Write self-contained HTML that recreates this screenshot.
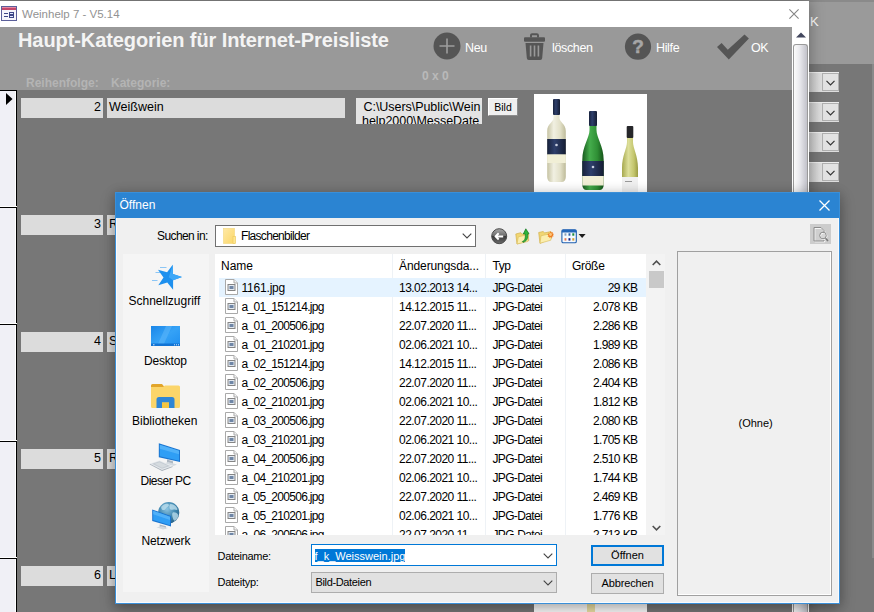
<!DOCTYPE html>
<html lang="de">
<head>
<meta charset="utf-8">
<title>Weinhelp 7 - V5.14</title>
<style>
*{box-sizing:border-box;margin:0;padding:0}
html,body{width:874px;height:612px;overflow:hidden;background:#777}
body{position:relative;font-family:"Liberation Sans",sans-serif;font-size:12px;color:#000}
.a{position:absolute}
.t{position:absolute;white-space:nowrap;line-height:1}
/* ---------- background form (behind main window) ---------- */
#bg{left:0;top:0;width:874px;height:612px;background:#777}
#bghead{left:0;top:0;width:874px;height:64px;background:#9a9a9a}
#topline{left:0;top:0;width:874px;height:2px;background:#8a8a8a}
.dd{left:809px;width:30px;height:20px;background:linear-gradient(90deg,#c8c8c8,#dedede 12px,#dedede);box-shadow:inset 0 1px 0 #ececec}
.dd i{position:absolute;left:13px;top:1px;width:17px;height:18px;background:#e2e2e2;border:1px solid #b0b0b0}
.dd svg{position:absolute;left:17px;top:7.500px}
/* ---------- main window ---------- */
#win{left:0;top:1px;width:809px;height:611px;background:#777;box-shadow:0 0 14px rgba(0,0,0,.35)}
#tbar{left:0;top:0;width:809px;height:26px;background:#fff}
#hdr{left:0;top:26px;width:792px;height:63px;background:#999}
#body{left:0;top:89px;width:792px;height:522px;background:#777}
#vsb{left:792px;top:26px;width:17px;height:585px;background:#fff}
#thumb{left:1px;top:17px;width:15px;height:568px;border:1px solid #9a9a9a;border-bottom:0;border-radius:3px 3px 0 0;background:linear-gradient(90deg,#fbfbfb 0%,#ebebef 40%,#c2c2ca 100%)}
#sel{left:0;top:89px;width:17px;height:522px;background:#f0f0f6;border-right:1px solid #000;border-top:1px solid #000;box-shadow:inset -1px 0 0 #fff}
.sl{left:0;width:17px;height:1px;background:#000;box-shadow:0 -1px 0 #fff}
.f{height:20px;background:#dcdcdc;font-size:12.5px;line-height:19px;overflow:hidden;white-space:nowrap}
.f1{left:21px;width:82px;text-align:right;padding-right:2px}
.f2{left:107px;width:238px;padding-left:2px}
.hl{font-weight:bold;color:#b4b4b4;font-size:12px}
.tb{color:#fff;font-size:12.5px;letter-spacing:-.35px}
/* ---------- open dialog ---------- */
#dlg{left:115px;top:192px;width:725px;height:412px;background:#f0f0f0;border:1px solid #3a8fd8;box-shadow:inset 0 0 0 1px #f7fbff,0 6px 14px 0 rgba(0,0,0,.28),0 0 10px 1px rgba(0,0,0,.12)}
#dtitle{left:0;top:0;width:723px;height:25px;background:#2b84d2}
</style>
</head>
<body>
<!-- background form -->
<div id="bg" class="a"></div>
<div id="bghead" class="a"></div>
<div id="topline" class="a"></div>
<div class="a" style="left:872px;top:64px;width:2px;height:494px;background:#8a8a8a"></div>
<div class="t" style="left:810px;top:15px;font-size:13px;color:#fff">K</div>
<div class="a dd" style="top:72px"><i></i><svg width="9" height="6" viewBox="0 0 9 6"><path d="M.5 .8 4.5 4.8 8.5 .8" fill="none" stroke="#333" stroke-width="1.2"/></svg></div>
<div class="a dd" style="top:102px"><i></i><svg width="9" height="6" viewBox="0 0 9 6"><path d="M.5 .8 4.5 4.8 8.5 .8" fill="none" stroke="#333" stroke-width="1.2"/></svg></div>
<div class="a dd" style="top:132px"><i></i><svg width="9" height="6" viewBox="0 0 9 6"><path d="M.5 .8 4.5 4.8 8.5 .8" fill="none" stroke="#333" stroke-width="1.2"/></svg></div>
<div class="a dd" style="top:162px"><i></i><svg width="9" height="6" viewBox="0 0 9 6"><path d="M.5 .8 4.5 4.8 8.5 .8" fill="none" stroke="#333" stroke-width="1.2"/></svg></div>

<!-- main window -->
<div id="win" class="a">
  <div id="tbar" class="a"></div>
  <div id="hdr" class="a"></div>
  <div id="body" class="a"></div>
  <div id="vsb" class="a"><div id="thumb" class="a"></div></div>
  <div id="sel" class="a"></div>
  <svg class="a" style="left:6px;top:92px" width="7" height="12" viewBox="0 0 7 12"><path d="M0 0 6.500 6 0 12z" fill="#000"/></svg>
  <div class="a sl" style="top:206px"></div>
  <div class="a sl" style="top:323px"></div>
  <div class="a sl" style="top:440px"></div>
  <div class="a sl" style="top:557px"></div>


  <!-- title bar -->
  <svg class="a" style="left:1px;top:5px" width="16" height="15" viewBox="0 0 16 15">
    <rect x=".5" y=".5" width="15" height="14" fill="#f4f4fb" stroke="#5b5f9a"/>
    <rect x="1" y="1" width="14" height="3" fill="#c5466a"/>
    <rect x="1" y="1" width="14" height="1" fill="#e58aa2"/>
    <path d="M3 7.5h4M3 10.5h4" stroke="#3d4687" stroke-width="1"/>
    <rect x="8.5" y="6.5" width="4" height="2" fill="#dfe6ff" stroke="#3d4687"/>
    <rect x="8.5" y="9.5" width="4" height="2" fill="#dfe6ff" stroke="#3d4687"/>
  </svg>
  <div class="t" id="wtitle" style="left:22px;top:8px;font-size:11.5px;color:#929292">Weinhelp 7 - V5.14</div>
  <svg class="a" style="left:789px;top:8px" width="10" height="10" viewBox="0 0 10 10"><path d="M.4 .4 9.600 9.600M9.600 .4 .4 9.600" stroke="#858585" stroke-width="1.100" fill="none"/></svg>
  <!-- scrollbar arrow -->
  <svg class="a" style="left:795.500px;top:31px" width="10" height="6" viewBox="0 0 10 6"><path d="M0 5.500 5 .5 10 5.500z" fill="#43475e"/></svg>

  <!-- header -->
  <div class="t" id="htitle" style="left:18px;top:29px;font-size:20px;letter-spacing:-.09px;font-weight:bold;color:#f4f4f4">Haupt-Kategorien für Internet-Preisliste</div>
  <div class="t hl" id="hl1" style="left:26px;top:76px">Reihenfolge:</div>
  <div class="t hl" id="hl2" style="left:111px;top:76px">Kategorie:</div>
  <div class="t hl" id="hl3" style="left:422px;top:69px;color:#b9b9b9">0 x 0</div>

  <!-- Neu -->
  <svg class="a" style="left:433px;top:31px" width="28" height="28" viewBox="0 0 28 28"><circle cx="14" cy="14" r="13.5" fill="#555"/><path d="M14 6.5v15M6.5 14h15" stroke="#9d9d9d" stroke-width="1.6" fill="none"/></svg>
  <div class="t tb" id="b1" style="margin-top:1.500px;left:465px;top:39px">Neu</div>
  <!-- löschen -->
  <svg class="a" style="left:524px;top:32px" width="21" height="27" viewBox="0 0 21 27">
    <path d="M7 4.500V2.300a1.100 1.100 0 0 1 1.100-1.100h4.800a1.100 1.100 0 0 1 1.100 1.100V4.500" fill="none" stroke="#555" stroke-width="1.900"/>
    <rect x="0" y="4.300" width="21" height="4.400" rx="1" fill="#555"/>
    <path d="M1.500 10h18l-1.300 15a2 2 0 0 1-2 1.900H4.800a2 2 0 0 1-2-1.900z" fill="#555"/>
    <path d="M6.600 12.500v11M10.500 12.500v11M14.400 12.500v11" stroke="#999" stroke-width="1.600"/>
  </svg>
  <div class="t tb" id="b2" style="margin-top:1.500px;left:552px;top:39px">löschen</div>
  <!-- Hilfe -->
  <svg class="a" style="left:624px;top:32px" width="28" height="28" viewBox="0 0 28 28"><circle cx="14" cy="13.700" r="13.100" fill="#555"/><text x="14" y="20.300" text-anchor="middle" font-family="Liberation Sans, sans-serif" font-weight="bold" font-size="19" fill="#a6a6a6" stroke="#a6a6a6" stroke-width=".5">?</text></svg>
  <div class="t tb" id="b3" style="margin-top:1.500px;left:656px;top:39px">Hilfe</div>
  <!-- OK -->
  <svg class="a" style="left:716px;top:32px" width="34" height="28" viewBox="0 0 34 28"><path d="M1 14.100 5.600 10 11.800 16.700 28.500 1.500 32.900 5.400 12.800 26.500z" fill="#555"/></svg>
  <div class="t tb" id="b4" style="margin-top:1.500px;left:751px;top:39px">OK</div>

  <!-- record 1 extras -->
  <div class="a" style="left:356px;top:97px;width:126px;height:26px;background:#e4e4e4;overflow:hidden;font-size:12.500px;line-height:14px;padding:2px 0 0 0;white-space:nowrap;letter-spacing:-.05px"><span style="margin-left:7.500px">C:\Users\Public\Wein</span><br><span style="margin-left:6px">help2000\MesseDate</span></div>
  <div class="a" style="left:488px;top:97px;width:30px;height:18px;background:#efefef;border:1px solid #fff;border-right-color:#8c8c8c;border-bottom-color:#8c8c8c;font-size:10.5px;line-height:16px;text-align:center">Bild</div>
  <div class="a" id="img1" style="left:534px;top:93px;width:113px;height:100px;background:#fff;overflow:hidden">
    <svg width="113" height="100" viewBox="0 0 113 100">
      <defs>
        <linearGradient id="g1" x1="0" x2="1"><stop offset="0" stop-color="#c6c3a3"/><stop offset=".35" stop-color="#f1f0e2"/><stop offset=".7" stop-color="#e2e0c8"/><stop offset="1" stop-color="#bebb9a"/></linearGradient>
        <linearGradient id="g2" x1="0" x2="1"><stop offset="0" stop-color="#17591e"/><stop offset=".35" stop-color="#45ad4c"/><stop offset=".7" stop-color="#2f8f35"/><stop offset="1" stop-color="#155219"/></linearGradient>
        <linearGradient id="g3" x1="0" x2="1"><stop offset="0" stop-color="#a6a84e"/><stop offset=".4" stop-color="#dddf9a"/><stop offset=".75" stop-color="#c3c56c"/><stop offset="1" stop-color="#999b43"/></linearGradient>
        <linearGradient id="gn" x1="0" x2="1"><stop offset="0" stop-color="#18223c"/><stop offset=".4" stop-color="#2e3f6b"/><stop offset="1" stop-color="#151d33"/></linearGradient>
      </defs>
      <!-- bottle 1 -->
      <path d="M19.500 6h6v18c0 4 6.300 6 6.300 13v46c0 3-1.800 5-4 5H17.200c-2.200 0-4-2-4-5V37c0-7 6.300-9 6.300-13z" fill="url(#g1)"/>
      <rect x="19" y="5" width="7" height="16" rx="1" fill="url(#gn)"/>
      <rect x="13.200" y="45" width="18.600" height="15.500" fill="url(#gn)"/>
      <rect x="13.200" y="60.500" width="18.600" height="8.500" fill="#f1efd6"/>
      <circle cx="22.500" cy="51" r="1.300" fill="#c9cfdf"/>
      <!-- bottle 2 -->
      <path d="M55.500 18h7v18c0 8 7.200 16 7.200 30v25c0 3-2 5-4 5H52.300c-2 0-4-2-4-5V66c0-14 7.200-22 7.200-30z" fill="url(#g2)"/>
      <rect x="55" y="17" width="8" height="15" rx="1" fill="url(#gn)"/>
      <rect x="48.300" y="67" width="21.400" height="15" fill="url(#gn)"/>
      <rect x="48.300" y="82" width="21.400" height="9.500" fill="#f1efd6"/>
      <circle cx="59" cy="73" r="1.300" fill="#c9cfdf"/>
      <!-- bottle 3 -->
      <path d="M93 33h6v15c0 6 5 14 5 26v26H88V74c0-12 5-20 5-26z" fill="url(#g3)"/>
      <rect x="92.700" y="32" width="6.600" height="12" rx="1" fill="#26262a"/>
      <rect x="88" y="83" width="16" height="17" fill="#f0f0f0"/>
      <rect x="91" y="87" width="7" height="1" fill="#999"/>
    </svg>
  </div>
  <!-- image visible below dialog -->
  <div class="a" style="left:534px;top:561px;width:113px;height:50px;background:#fff"><div class="a" style="left:53px;top:30px;width:8px;height:20px;background:#efe3a6"></div></div>
  <div class="a f f1" style="top:97px">2</div><div class="a f f2" style="top:97px">Weißwein</div>
  <div class="a f f1" style="top:214px">3</div><div class="a f f2" style="top:214px">Rotwein</div>
  <div class="a f f1" style="top:331px">4</div><div class="a f f2" style="top:331px">Sekt</div>
  <div class="a f f1" style="top:448px">5</div><div class="a f f2" style="top:448px">Rosé</div>
  <div class="a f f1" style="top:565px">6</div><div class="a f f2" style="top:565px">Likör</div>
</div>

<!-- dialog -->
<div id="dlg" class="a">
  <div id="dtitle" class="a"></div>
  <div class="t" style="left:3.5px;top:5.5px;font-size:12px;color:#fff">Öffnen</div>
  <svg class="a" style="left:702.5px;top:6.5px" width="11" height="11" viewBox="0 0 11 11"><path d="M.5 .5 10.500 10.500M10.500 .5 .5 10.500" stroke="#fff" stroke-width="1.300" fill="none"/></svg>
  <div class="t" style="left:41px;top:36.5px;letter-spacing:-.6px">Suchen in:</div>
  <div class="a" id="lookin" style="left:99px;top:32px;width:261px;height:22px;background:#fff;border:1px solid #707070"></div>
  <svg class="a" style="left:107px;top:35px" width="13" height="16" viewBox="0 0 13 16"><defs><linearGradient id="gf" x1="0" y1="0" x2="1" y2="1"><stop offset="0" stop-color="#ffe9a6"/><stop offset="1" stop-color="#fbd768"/></linearGradient></defs><rect x=".4" y=".3" width="11.200" height="15.300" fill="url(#gf)" stroke="#f3d983" stroke-width=".6"/><rect x="10" y="8.300" width="2.600" height="7.300" fill="#ffe68f" stroke="#ecc95c" stroke-width=".6"/></svg>
  <div class="t" style="left:125px;top:36.5px;letter-spacing:-.7px">Flaschenbilder</div>
  <svg class="a" style="left:346px;top:40px" width="10" height="6" viewBox="0 0 10 6"><path d="M.700 .700 5 5 9.300 .700" fill="none" stroke="#444" stroke-width="1.100"/></svg>
  <svg class="a" style="left:375px;top:35px" width="17" height="17" viewBox="0 0 17 17"><defs><linearGradient id="gb" x1="0" y1="0" x2="0" y2="1"><stop offset="0" stop-color="#a8a8a8"/><stop offset=".48" stop-color="#6a6a6a"/><stop offset=".52" stop-color="#3a3a3a"/><stop offset="1" stop-color="#6c6c6c"/></linearGradient></defs><circle cx="8.200" cy="8.200" r="7.500" fill="url(#gb)" stroke="#4a4a4a" stroke-width="1"/><path d="M12.200 8.400H5M7.700 5.300 4.500 8.400l3.200 3.100" fill="none" stroke="#fff" stroke-width="2" stroke-linejoin="round"/></svg>
  <svg class="a" style="left:398.5px;top:34.5px" width="15" height="17" viewBox="0 0 15 17"><path d="M.8 6l5-1.300 1 1.500 6.300-1.400.7 7.700L2 16z" fill="#f1d673" stroke="#d2b04a" stroke-width=".7"/><path d="M2 16 3.300 8.800l10.700-2.300-1.200 7z" fill="#fbeeae" stroke="#d9bb59" stroke-width=".6"/><path d="M7.300 13.500c2.300-.6 3.300-2.600 3-7.500H8.300L10.800.8l3.200 4.900-1.300.3c.5 4.500-1 7.300-4.700 8.300z" fill="#2fb53a" stroke="#13751f" stroke-width=".7" stroke-linejoin="round"/></svg>
  <svg class="a" style="left:421.5px;top:36.5px" width="17" height="14" viewBox="0 0 17 14"><path d="M.7 2.500l4.600-1 1 1.400 6.700-1.300.6 6.600L2 13.300z" fill="#f1d673" stroke="#d2b04a" stroke-width=".7"/><path d="M2 13.300 3 5.800l11-2.500-1.200 6.900z" fill="#fbeeae" stroke="#d9bb59" stroke-width=".6"/><path d="M12.500 1.200l.8 1.400 1.500-.7-.3 1.600 1.600.5-1.300 1 1 1.300-1.600.2-.1 1.600-1.300-1-1.100 1.200-.5-1.600-1.600.1.900-1.400-1.300-1 1.600-.4-.3-1.600 1.400.8z" fill="#ef7d22"/><circle cx="12.500" cy="4.500" r="1.400" fill="#fcc67a"/></svg>
  <svg class="a" style="left:444.5px;top:36px" width="25" height="14.500" viewBox="0 0 25 14.500"><rect x=".9" y=".8" width="14.400" height="13" rx="1.300" fill="#f4f9ff" stroke="#1f5fae" stroke-width="1.100"/><path d="M.9 3.600V2.100A1.300 1.300 0 0 1 2.200 .8h11.800a1.300 1.300 0 0 1 1.300 1.300v1.500z" fill="#2467ba"/><rect x="3.500" y="4.300" width="1.900" height="2.400" fill="#8aa0b8"/><rect x="7.500" y="4.300" width="1.900" height="2.400" fill="#2a5fa8"/><rect x="11.300" y="4.300" width="2" height="2.400" fill="#1e8a3c"/><rect x="3.500" y="9.200" width="1.900" height="2.400" fill="#e87850"/><rect x="7.500" y="9.200" width="1.900" height="2.400" fill="#101c80"/><rect x="11.300" y="9.200" width="2" height="2.400" fill="#d8a030"/><path d="M17.600 5h7L21.100 9z" fill="#1c1c1c"/></svg>
  <div class="a" style="left:7px;top:61px;width:86px;height:338px;background:#f5f5f5"></div>
  <svg class="a" style="left:35px;top:71px" width="32" height="27" viewBox="0 0 32 27"><path d="M9 3.500h6.500M4.500 8.500h6.500M1 16.500h5.500" stroke="#8cc6f5" stroke-width="1.200"/><path d="M21.7 0.7 22.0 10.1 31.0 13.1 22.1 16.3 22.1 25.8 16.3 18.4 7.3 21.2 12.5 13.4 7.0 5.7 16.1 8.3z" fill="#1e90ee"/><path d="M21.7 0.7 22.0 10.1 31.0 13.1 22.1 16.3 17.8 13.3z" fill="#3ea8f8"/></svg>
  <div class="t" style="left:12.5px;top:102.0px;letter-spacing:0px">Schnellzugriff</div>
  <svg class="a" style="left:34.5px;top:133px" width="29" height="20" viewBox="0 0 29 20"><defs><linearGradient id="gd" x1="0" y1="0" x2="1" y2="1"><stop offset="0" stop-color="#1a86e8"/><stop offset=".5" stop-color="#35a2f6"/><stop offset="1" stop-color="#1f8ff0"/></linearGradient></defs><rect x="0" y="0" width="29" height="20" fill="url(#gd)"/><path d="M15 0h6L12 20H6z" fill="#5cb6fa" opacity=".55"/><rect x="0" y="17.500" width="29" height="2.500" fill="#1173d4"/><path d="M2 18.800h1.500M23 18.800h1M25 18.800h1M27 18.800h1" stroke="#cfe6fb" stroke-width="1"/></svg>
  <div class="t" style="left:28px;top:162.0px;letter-spacing:-0.2px">Desktop</div>
  <svg class="a" style="left:34.5px;top:190.5px" width="29" height="24" viewBox="0 0 29 24"><path d="M0 1.500a1.500 1.500 0 0 1 1.500-1.500h9.500l2.500 3H0z" fill="#e2a52a"/><path d="M0 3h12l2-1.500h13.500a1.500 1.500 0 0 1 1.500 1.500v19.500a1.500 1.500 0 0 1-1.500 1.500H1.500a1.500 1.500 0 0 1-1.500-1.500z" fill="#fbd56a"/><path d="M5.500 24v-8.500a2.500 2.500 0 0 1 2.500-2.500h13a2.500 2.500 0 0 1 2.500 2.500v8.500h-5.500v-5.500h-7v5.500z" fill="#2f86d6"/><rect x="11" y="18.500" width="7" height="5.500" fill="#f4c542"/></svg>
  <div class="t" style="left:16px;top:221.5px;letter-spacing:0px">Bibliotheken</div>
  <svg class="a" style="left:33px;top:249px" width="32" height="29" viewBox="0 0 32 29"><path d="M18 17.500l6 1.800v3.200l-6-1.800z" fill="#aeb8c2"/><path d="M15.500 21.300 24.500 24l3.500-1.500-9-2.600z" fill="#d3dae0"/><path d="M9.800 1.300 31 7.900V20.100L9.800 15.200z" fill="#1b75d0"/><path d="M10.800 2.700 30 8.700V18.800L10.800 14.300z" fill="#2f9ef5"/><path d="M10.800 2.700 30 8.700v3.500L10.800 6.700z" fill="#62bbfa" opacity=".65"/><path d="M.8 21.700 10.600 18.500 23.600 24.200 13 28z" fill="#e3e7eb"/><path d="M3 21.700 10.500 19.300 21 24 13 26.800z" fill="#c5ccd3"/><path d="M5.500 21.800 10.500 20.200 18.500 23.800 13 25.700z" fill="#dfe4e8" opacity=".6"/><path d="M.8 21.700 13 28v.9L.8 22.600zM13 28l10.600-3.800v.9L13 28.900z" fill="#a5aeb7"/></svg>
  <div class="t" style="left:24.5px;top:281.5px;letter-spacing:-0.5px">Dieser PC</div>
  <svg class="a" style="left:35px;top:308px" width="29" height="29" viewBox="0 0 29 29"><defs><radialGradient id="gg" cx=".42" cy=".32" r=".75"><stop offset="0" stop-color="#8cc4e2"/><stop offset=".55" stop-color="#3f86ae"/><stop offset="1" stop-color="#245d83"/></radialGradient></defs><circle cx="17.700" cy="11.700" r="10.600" fill="url(#gg)"/><path d="M10.500 5.500c1.500-2 4.500-3.300 6.500-2.500s.5 2.500-1 3.200-1 2.300-3 2.800-3.500-2-2.500-3.500zM19.500 3c2.500 0 5 1.500 6.500 4s-1 2-2.500 1.500-2.500 1-4 0-1.500-5.500 0-5.500zM22 11.500c1.500-.5 4 .5 5 2s-1 5-2.500 6-2.500-1.500-3-3.500-.500-4 .5-4.500z" fill="#c2e1ef" opacity=".75"/><path d="M8.600 23.500l6.400 1.700v2.300l-6.400-1.700z" fill="#aeb8c2"/><path d="M5.500 26.300 12 28.500l5-1.400-6.500-1.800z" fill="#d3dae0"/><path d="M1.200 8.400 20 15V25.600L1.200 19.900z" fill="#1b75d0"/><path d="M2.200 9.800 19 15.700v8.600L2.200 19.100z" fill="#2f9ef5"/><path d="M2.200 9.800 19 15.700v3.300L2.200 13.300z" fill="#62bbfa" opacity=".65"/></svg>
  <div class="t" style="left:25.5px;top:341.5px;letter-spacing:-0.15px">Netzwerk</div>
  <div class="a" id="flist" style="left:99px;top:61px;width:450px;height:281px;background:#fff;overflow:hidden">
  <div class="a" style="left:177px;top:0;width:1px;height:281px;background:#eef2f6"></div>
  <div class="a" style="left:270px;top:0;width:1px;height:281px;background:#eef2f6"></div>
  <div class="a" style="left:350px;top:0;width:1px;height:281px;background:#eef2f6"></div>
  <div class="t" style="left:6px;top:6px">Name</div>
  <div class="t" style="left:184px;top:6px;letter-spacing:-.1px">Änderungsda...</div>
  <div class="t" style="left:277.5px;top:6px;letter-spacing:-.5px">Typ</div>
  <div class="t" style="left:357px;top:6px;letter-spacing:-.3px">Größe</div>
  <div class="a" style="left:4px;top:24px;width:427px;height:19px;background:#e5f3ff"></div>
  <svg class="a fi" style="left:9.5px;top:25px" width="13" height="16" viewBox="0 0 13 16"><path d="M.5 .5h8.500l3.500 3.500v11.500H.5z" fill="#fff" stroke="#a9a9a9"/><path d="M9 .5v3.500h3.500" fill="#f4f4f4" stroke="#a9a9a9"/><rect x="3" y="5.500" width="7" height="6" fill="#e3e9f0" stroke="#858585"/><rect x="4.500" y="7" width="4" height="3" fill="#6f86a6"/></svg>
  <div class="t" style="left:26.5px;top:28px;letter-spacing:-.2px">1161.jpg</div>
  <div class="t" style="left:184px;top:28px;letter-spacing:-.53px">13.02.2013 14...</div>
  <div class="t" style="left:277.5px;top:28px;letter-spacing:-.66px">JPG-Datei</div>
  <div class="t" style="right:27.6px;top:28px;letter-spacing:-.62px">29 KB</div>
  <svg class="a fi" style="left:9.5px;top:44px" width="13" height="16" viewBox="0 0 13 16"><path d="M.5 .5h8.500l3.500 3.500v11.500H.5z" fill="#fff" stroke="#a9a9a9"/><path d="M9 .5v3.500h3.500" fill="#f4f4f4" stroke="#a9a9a9"/><rect x="3" y="5.500" width="7" height="6" fill="#e3e9f0" stroke="#858585"/><rect x="4.500" y="7" width="4" height="3" fill="#6f86a6"/></svg>
  <div class="t" style="left:26.5px;top:47px;letter-spacing:-.7px">a_01_151214.jpg</div>
  <div class="t" style="left:184px;top:47px;letter-spacing:-.53px">14.12.2015 11...</div>
  <div class="t" style="left:277.5px;top:47px;letter-spacing:-.66px">JPG-Datei</div>
  <div class="t" style="right:27.6px;top:47px;letter-spacing:-.62px">2.078 KB</div>
  <svg class="a fi" style="left:9.5px;top:63px" width="13" height="16" viewBox="0 0 13 16"><path d="M.5 .5h8.500l3.500 3.500v11.500H.5z" fill="#fff" stroke="#a9a9a9"/><path d="M9 .5v3.500h3.500" fill="#f4f4f4" stroke="#a9a9a9"/><rect x="3" y="5.500" width="7" height="6" fill="#e3e9f0" stroke="#858585"/><rect x="4.500" y="7" width="4" height="3" fill="#6f86a6"/></svg>
  <div class="t" style="left:26.5px;top:66px;letter-spacing:-.7px">a_01_200506.jpg</div>
  <div class="t" style="left:184px;top:66px;letter-spacing:-.53px">22.07.2020 11...</div>
  <div class="t" style="left:277.5px;top:66px;letter-spacing:-.66px">JPG-Datei</div>
  <div class="t" style="right:27.6px;top:66px;letter-spacing:-.62px">2.286 KB</div>
  <svg class="a fi" style="left:9.5px;top:82px" width="13" height="16" viewBox="0 0 13 16"><path d="M.5 .5h8.500l3.500 3.500v11.500H.5z" fill="#fff" stroke="#a9a9a9"/><path d="M9 .5v3.500h3.500" fill="#f4f4f4" stroke="#a9a9a9"/><rect x="3" y="5.500" width="7" height="6" fill="#e3e9f0" stroke="#858585"/><rect x="4.500" y="7" width="4" height="3" fill="#6f86a6"/></svg>
  <div class="t" style="left:26.5px;top:85px;letter-spacing:-.7px">a_01_210201.jpg</div>
  <div class="t" style="left:184px;top:85px;letter-spacing:-.53px">02.06.2021 10...</div>
  <div class="t" style="left:277.5px;top:85px;letter-spacing:-.66px">JPG-Datei</div>
  <div class="t" style="right:27.6px;top:85px;letter-spacing:-.62px">1.989 KB</div>
  <svg class="a fi" style="left:9.5px;top:101px" width="13" height="16" viewBox="0 0 13 16"><path d="M.5 .5h8.500l3.500 3.500v11.500H.5z" fill="#fff" stroke="#a9a9a9"/><path d="M9 .5v3.500h3.500" fill="#f4f4f4" stroke="#a9a9a9"/><rect x="3" y="5.500" width="7" height="6" fill="#e3e9f0" stroke="#858585"/><rect x="4.500" y="7" width="4" height="3" fill="#6f86a6"/></svg>
  <div class="t" style="left:26.5px;top:104px;letter-spacing:-.7px">a_02_151214.jpg</div>
  <div class="t" style="left:184px;top:104px;letter-spacing:-.53px">14.12.2015 11...</div>
  <div class="t" style="left:277.5px;top:104px;letter-spacing:-.66px">JPG-Datei</div>
  <div class="t" style="right:27.6px;top:104px;letter-spacing:-.62px">2.086 KB</div>
  <svg class="a fi" style="left:9.5px;top:120px" width="13" height="16" viewBox="0 0 13 16"><path d="M.5 .5h8.500l3.500 3.500v11.500H.5z" fill="#fff" stroke="#a9a9a9"/><path d="M9 .5v3.500h3.500" fill="#f4f4f4" stroke="#a9a9a9"/><rect x="3" y="5.500" width="7" height="6" fill="#e3e9f0" stroke="#858585"/><rect x="4.500" y="7" width="4" height="3" fill="#6f86a6"/></svg>
  <div class="t" style="left:26.5px;top:123px;letter-spacing:-.7px">a_02_200506.jpg</div>
  <div class="t" style="left:184px;top:123px;letter-spacing:-.53px">22.07.2020 11...</div>
  <div class="t" style="left:277.5px;top:123px;letter-spacing:-.66px">JPG-Datei</div>
  <div class="t" style="right:27.6px;top:123px;letter-spacing:-.62px">2.404 KB</div>
  <svg class="a fi" style="left:9.5px;top:139px" width="13" height="16" viewBox="0 0 13 16"><path d="M.5 .5h8.500l3.500 3.500v11.500H.5z" fill="#fff" stroke="#a9a9a9"/><path d="M9 .5v3.500h3.500" fill="#f4f4f4" stroke="#a9a9a9"/><rect x="3" y="5.500" width="7" height="6" fill="#e3e9f0" stroke="#858585"/><rect x="4.500" y="7" width="4" height="3" fill="#6f86a6"/></svg>
  <div class="t" style="left:26.5px;top:142px;letter-spacing:-.7px">a_02_210201.jpg</div>
  <div class="t" style="left:184px;top:142px;letter-spacing:-.53px">02.06.2021 10...</div>
  <div class="t" style="left:277.5px;top:142px;letter-spacing:-.66px">JPG-Datei</div>
  <div class="t" style="right:27.6px;top:142px;letter-spacing:-.62px">1.812 KB</div>
  <svg class="a fi" style="left:9.5px;top:158px" width="13" height="16" viewBox="0 0 13 16"><path d="M.5 .5h8.500l3.500 3.500v11.500H.5z" fill="#fff" stroke="#a9a9a9"/><path d="M9 .5v3.500h3.500" fill="#f4f4f4" stroke="#a9a9a9"/><rect x="3" y="5.500" width="7" height="6" fill="#e3e9f0" stroke="#858585"/><rect x="4.500" y="7" width="4" height="3" fill="#6f86a6"/></svg>
  <div class="t" style="left:26.5px;top:161px;letter-spacing:-.7px">a_03_200506.jpg</div>
  <div class="t" style="left:184px;top:161px;letter-spacing:-.53px">22.07.2020 11...</div>
  <div class="t" style="left:277.5px;top:161px;letter-spacing:-.66px">JPG-Datei</div>
  <div class="t" style="right:27.6px;top:161px;letter-spacing:-.62px">2.080 KB</div>
  <svg class="a fi" style="left:9.5px;top:177px" width="13" height="16" viewBox="0 0 13 16"><path d="M.5 .5h8.500l3.500 3.500v11.500H.5z" fill="#fff" stroke="#a9a9a9"/><path d="M9 .5v3.500h3.500" fill="#f4f4f4" stroke="#a9a9a9"/><rect x="3" y="5.500" width="7" height="6" fill="#e3e9f0" stroke="#858585"/><rect x="4.500" y="7" width="4" height="3" fill="#6f86a6"/></svg>
  <div class="t" style="left:26.5px;top:180px;letter-spacing:-.7px">a_03_210201.jpg</div>
  <div class="t" style="left:184px;top:180px;letter-spacing:-.53px">02.06.2021 10...</div>
  <div class="t" style="left:277.5px;top:180px;letter-spacing:-.66px">JPG-Datei</div>
  <div class="t" style="right:27.6px;top:180px;letter-spacing:-.62px">1.705 KB</div>
  <svg class="a fi" style="left:9.5px;top:196px" width="13" height="16" viewBox="0 0 13 16"><path d="M.5 .5h8.500l3.500 3.500v11.500H.5z" fill="#fff" stroke="#a9a9a9"/><path d="M9 .5v3.500h3.500" fill="#f4f4f4" stroke="#a9a9a9"/><rect x="3" y="5.500" width="7" height="6" fill="#e3e9f0" stroke="#858585"/><rect x="4.500" y="7" width="4" height="3" fill="#6f86a6"/></svg>
  <div class="t" style="left:26.5px;top:199px;letter-spacing:-.7px">a_04_200506.jpg</div>
  <div class="t" style="left:184px;top:199px;letter-spacing:-.53px">22.07.2020 11...</div>
  <div class="t" style="left:277.5px;top:199px;letter-spacing:-.66px">JPG-Datei</div>
  <div class="t" style="right:27.6px;top:199px;letter-spacing:-.62px">2.510 KB</div>
  <svg class="a fi" style="left:9.5px;top:215px" width="13" height="16" viewBox="0 0 13 16"><path d="M.5 .5h8.500l3.500 3.500v11.500H.5z" fill="#fff" stroke="#a9a9a9"/><path d="M9 .5v3.500h3.500" fill="#f4f4f4" stroke="#a9a9a9"/><rect x="3" y="5.500" width="7" height="6" fill="#e3e9f0" stroke="#858585"/><rect x="4.500" y="7" width="4" height="3" fill="#6f86a6"/></svg>
  <div class="t" style="left:26.5px;top:218px;letter-spacing:-.7px">a_04_210201.jpg</div>
  <div class="t" style="left:184px;top:218px;letter-spacing:-.53px">02.06.2021 10...</div>
  <div class="t" style="left:277.5px;top:218px;letter-spacing:-.66px">JPG-Datei</div>
  <div class="t" style="right:27.6px;top:218px;letter-spacing:-.62px">1.744 KB</div>
  <svg class="a fi" style="left:9.5px;top:234px" width="13" height="16" viewBox="0 0 13 16"><path d="M.5 .5h8.500l3.500 3.500v11.500H.5z" fill="#fff" stroke="#a9a9a9"/><path d="M9 .5v3.500h3.500" fill="#f4f4f4" stroke="#a9a9a9"/><rect x="3" y="5.500" width="7" height="6" fill="#e3e9f0" stroke="#858585"/><rect x="4.500" y="7" width="4" height="3" fill="#6f86a6"/></svg>
  <div class="t" style="left:26.5px;top:237px;letter-spacing:-.7px">a_05_200506.jpg</div>
  <div class="t" style="left:184px;top:237px;letter-spacing:-.53px">22.07.2020 11...</div>
  <div class="t" style="left:277.5px;top:237px;letter-spacing:-.66px">JPG-Datei</div>
  <div class="t" style="right:27.6px;top:237px;letter-spacing:-.62px">2.469 KB</div>
  <svg class="a fi" style="left:9.5px;top:253px" width="13" height="16" viewBox="0 0 13 16"><path d="M.5 .5h8.500l3.500 3.500v11.500H.5z" fill="#fff" stroke="#a9a9a9"/><path d="M9 .5v3.500h3.500" fill="#f4f4f4" stroke="#a9a9a9"/><rect x="3" y="5.500" width="7" height="6" fill="#e3e9f0" stroke="#858585"/><rect x="4.500" y="7" width="4" height="3" fill="#6f86a6"/></svg>
  <div class="t" style="left:26.5px;top:256px;letter-spacing:-.7px">a_05_210201.jpg</div>
  <div class="t" style="left:184px;top:256px;letter-spacing:-.53px">02.06.2021 10...</div>
  <div class="t" style="left:277.5px;top:256px;letter-spacing:-.66px">JPG-Datei</div>
  <div class="t" style="right:27.6px;top:256px;letter-spacing:-.62px">1.776 KB</div>
  <svg class="a fi" style="left:9.5px;top:272px" width="13" height="16" viewBox="0 0 13 16"><path d="M.5 .5h8.500l3.500 3.500v11.500H.5z" fill="#fff" stroke="#a9a9a9"/><path d="M9 .5v3.500h3.500" fill="#f4f4f4" stroke="#a9a9a9"/><rect x="3" y="5.500" width="7" height="6" fill="#e3e9f0" stroke="#858585"/><rect x="4.500" y="7" width="4" height="3" fill="#6f86a6"/></svg>
  <div class="t" style="left:26.5px;top:275px;letter-spacing:-.7px">a_06_200506.jpg</div>
  <div class="t" style="left:184px;top:275px;letter-spacing:-.53px">22.07.2020 11...</div>
  <div class="t" style="left:277.5px;top:275px;letter-spacing:-.66px">JPG-Datei</div>
  <div class="t" style="right:27.6px;top:275px;letter-spacing:-.62px">2.713 KB</div>
  <div class="a" style="left:431px;top:0;width:19px;height:281px;background:#f3f3f3"></div>
  <div class="a" style="left:434px;top:17px;width:15px;height:17px;background:#c9c9c9"></div>
  <svg class="a" style="left:437px;top:6px" width="9" height="6" viewBox="0 0 9 6"><path d="M.700 5 4.500 1.200 8.300 5" fill="none" stroke="#505050" stroke-width="1.600"/></svg>
  <svg class="a" style="left:437px;top:270.5px" width="9" height="6" viewBox="0 0 9 6"><path d="M.700 1 4.500 4.800 8.300 1" fill="none" stroke="#505050" stroke-width="1.600"/></svg>
  </div>
  <div class="a" style="left:694px;top:31px;width:21px;height:20px;background:#ccc"></div>
  <svg class="a" style="left:696px;top:32.5px" width="18" height="17" viewBox="0 0 18 17"><path d="M2 1.500h7l3 3v10.500H2z" fill="#cfcfcf" stroke="#fff" stroke-width="1" transform="translate(.8 .8)"/><path d="M2 1.500h7l3 3v10.500H2z" fill="none" stroke="#8b8b8b" stroke-width="1"/><circle cx="11" cy="9.500" r="3.300" fill="#d6d6d6" stroke="#fff" stroke-width="1" transform="translate(.7 .7)"/><circle cx="11" cy="9.500" r="3.300" fill="none" stroke="#8b8b8b" stroke-width="1"/><path d="M13.500 12.200 16 15" stroke="#7a7a7a" stroke-width="1.600"/></svg>
  <div class="a" style="left:561px;top:58px;width:155px;height:345px;border:1px solid #a0a0a0;box-shadow:inset -1px -1px 0 #fff"></div>
  <div class="t" style="left:622.5px;top:225px;font-size:11px">(Ohne)</div>
  <div class="t" style="left:101.5px;top:357.5px;font-size:11px;letter-spacing:-.3px">Dateiname:</div>
  <div class="t" style="left:101.5px;top:384px;font-size:11px;letter-spacing:-.25px">Dateityp:</div>
  <div class="a" style="left:195px;top:351px;width:246px;height:22px;background:#fff;border:1px solid #0078d7"></div>
  <div class="a" style="left:198.5px;top:356px;width:90px;height:13px;background:#0078d7"></div>
  <div class="t" style="left:198.5px;top:357.5px;font-size:11px;color:#fff">f_k_Weisswein.jpg</div>
  <svg class="a" style="left:427px;top:359.5px" width="10" height="6" viewBox="0 0 10 6"><path d="M.700 .700 5 5 9.300 .700" fill="none" stroke="#444" stroke-width="1.100"/></svg>
  <div class="a" style="left:195px;top:379px;width:246px;height:21px;background:#e1e1e1;border:1px solid #adadad"></div>
  <div class="t" style="left:199.5px;top:384px;font-size:11px;letter-spacing:-.35px">Bild-Dateien</div>
  <svg class="a" style="left:427px;top:386.5px" width="10" height="6" viewBox="0 0 10 6"><path d="M.700 .700 5 5 9.300 .700" fill="none" stroke="#444" stroke-width="1.100"/></svg>
  <div class="a" style="left:475px;top:352px;width:73px;height:21px;background:#e1e1e1;border:2px solid #0078d7;font-size:11px;line-height:17px;text-align:center">Öffnen</div>
  <div class="a" style="left:475px;top:380px;width:73px;height:21px;background:#e1e1e1;border:1px solid #adadad;font-size:11px;line-height:19px;text-align:center;letter-spacing:-.15px">Abbrechen</div>
</div>
</body>
</html>
